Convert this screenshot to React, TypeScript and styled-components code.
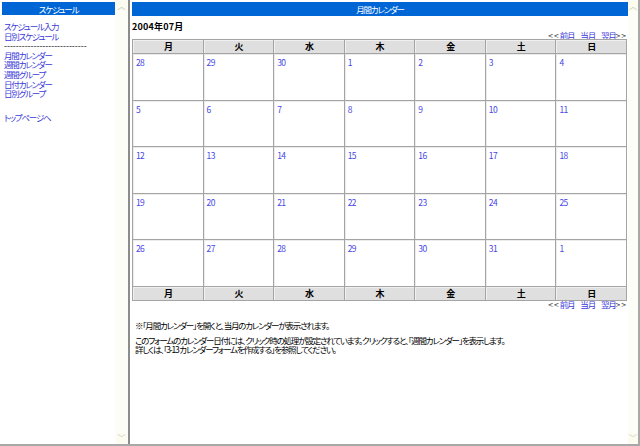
import React from "react";
import styled, { createGlobalStyle } from "styled-components";

const Global = createGlobalStyle`
  html, body { margin: 0; padding: 0; background: #ffffff; overflow: hidden; }
  * { box-sizing: border-box; }
`;

const FONT = `"Noto Sans CJK JP", "Noto Sans", sans-serif`;

const Window = styled.div`
  width: 640px;
  height: 446px;
  display: flex;
  border-right: 2px solid #a8a8a8;
  border-bottom: 2px solid #a8a8a8;
  font-family: ${FONT};
  font-feature-settings: "palt";
  font-size: 8.5px;
  letter-spacing: -1.2px;
  color: #000;
`;

const Frame = styled.div<{ $w?: number }>`
  display: flex;
  height: 100%;
  ${(p) => (p.$w ? `width: ${p.$w}px;` : "flex: 1;")}
`;

const FrameBody = styled.div<{ $pad: number }>`
  flex: 1;
  padding: 2px 0 0 ${(p) => p.$pad}px;
  display: flex;
  flex-direction: column;
`;

const Divider = styled.div`
  width: 3px;
  height: 100%;
  border-left: 2px solid #8c8c8c;
  background: #ffffff;
`;

const Scrollbar = styled.div<{ $w: number }>`
  width: ${(p) => p.$w}px;
  height: 100%;
  background: #fdfdf7;
  display: flex;
  flex-direction: column;
  justify-content: space-between;
  align-items: center;
  padding: 1px 0 1px;
`;

const Arrow = styled.div`
  width: 10px;
  height: 10px;
  display: flex;
  align-items: center;
  justify-content: center;
  background: #fbfbef;
  color: #c8c8c0;
  font-size: 8px;
  letter-spacing: 0;
  line-height: 1;
`;

const HeaderBar = styled.div<{ $h: number }>`
  height: ${(p) => p.$h}px;
  background: #0066d6;
  color: #ffffff;
  display: flex;
  align-items: center;
  justify-content: center;
`;

const SideMenu = styled.div`
  display: flex;
  flex-direction: column;
  padding: 7px 0 0 2px;
  line-height: 9.6px;
`;

const SideLink = styled.a<{ $gap?: number }>`
  color: #3a3ad8;
  text-decoration: none;
  white-space: nowrap;
  margin-top: ${(p) => p.$gap ?? 0}px;
`;

const Dashes = styled.div`
  color: #000;
  white-space: nowrap;
  letter-spacing: 0;
`;

const Title = styled.div`
  font-weight: bold;
  font-size: 9px;
  letter-spacing: 0.2px;
  margin: 6px 0 0 0;
  height: 10px;
  line-height: 10px;
`;

const Nav = styled.div`
  display: flex;
  justify-content: flex-end;
  gap: 6px;
  height: 7px;
  line-height: 7px;
  color: #444;
  white-space: nowrap;
`;

const Angle = styled.span`
  letter-spacing: 1px;
`;

const NavLink = styled.a`
  color: #3a3ad8;
  text-decoration: none;
`;

const Content = styled.div`
  width: 495px;
  display: flex;
  flex-direction: column;
`;

const Grid = styled.div`
  display: grid;
  grid-template-columns: repeat(7, 1fr);
  grid-template-rows: 14px repeat(5, 46.6px) 14px;
  border-top: 1px solid #a4a4a4;
  border-left: 1px solid #a4a4a4;
`;

const HeadCell = styled.div`
  background: #dfdfdf;
  border-right: 1px solid #a4a4a4;
  border-bottom: 1px solid #a4a4a4;
  box-shadow: inset 1px 1px 0 #f0f0f0;
  display: flex;
  align-items: center;
  justify-content: center;
  font-weight: bold;
  font-size: 9px;
`;

const DayCell = styled.div`
  border-right: 1px solid #a4a4a4;
  border-bottom: 1px solid #a4a4a4;
  box-shadow: inset 1px 1px 0 #ececec;
  padding: 3px 0 0 3px;
  line-height: 10px;
  letter-spacing: -0.6px;
`;

const DayLink = styled.a`
  color: #4646e6;
  text-decoration: none;
`;

const Notes = styled.div`
  margin: 13px 0 0 3px;
  line-height: 9.5px;
  white-space: nowrap;
`;

const NoteGap = styled.div`
  height: 5.5px;
`;

const WEEK = ["月", "火", "水", "木", "金", "土", "日"];
const DAYS = [
  28, 29, 30, 1, 2, 3, 4,
  5, 6, 7, 8, 9, 10, 11,
  12, 13, 14, 15, 16, 17, 18,
  19, 20, 21, 22, 23, 24, 25,
  26, 27, 28, 29, 30, 31, 1,
];

const Navigation = () => (
  <Nav>
    <span>
      <Angle>&lt;&lt;</Angle>
      <NavLink href="#">前月</NavLink>
    </span>
    <NavLink href="#">当月</NavLink>
    <span>
      <NavLink href="#">翌月</NavLink>
      <Angle>&gt;&gt;</Angle>
    </span>
  </Nav>
);

export default function App() {
  return (
    <>
      <Global />
      <Window>
        <Frame $w={128}>
          <FrameBody $pad={2}>
            <HeaderBar $h={13}>スケジュール</HeaderBar>
            <SideMenu>
              <SideLink href="#">スケジュール入力</SideLink>
              <SideLink href="#">日別スケジュール</SideLink>
              <Dashes>----------------------------</Dashes>
              <SideLink href="#">月間カレンダー</SideLink>
              <SideLink href="#">週間カレンダー</SideLink>
              <SideLink href="#">週間グループ</SideLink>
              <SideLink href="#">日付カレンダー</SideLink>
              <SideLink href="#">日別グループ</SideLink>
              <SideLink href="#" $gap={14.4}>トップページへ</SideLink>
            </SideMenu>
          </FrameBody>
          <Scrollbar $w={13}>
            <Arrow>︿</Arrow>
            <Arrow>﹀</Arrow>
          </Scrollbar>
        </Frame>
        <Divider />
        <Frame>
          <FrameBody $pad={1}>
            <HeaderBar $h={14}>月間カレンダー</HeaderBar>
            <Content>
              <Title>2004年07月</Title>
              <Navigation />
              <Grid>
                {WEEK.map((w) => (
                  <HeadCell key={"h" + w}>{w}</HeadCell>
                ))}
                {DAYS.map((d, i) => (
                  <DayCell key={i}>
                    <DayLink href="#">{d}</DayLink>
                  </DayCell>
                ))}
                {WEEK.map((w) => (
                  <HeadCell key={"f" + w}>{w}</HeadCell>
                ))}
              </Grid>
              <Navigation />
              <Notes>
                <div>※「月間カレンダー」を開くと、当月のカレンダーが表示されます。</div>
                <NoteGap />
                <div>
                  このフォームのカレンダー日付には、クリック時の処理が設定されています。クリックすると、「週間カレンダー」を表示します。
                </div>
                <div>詳しくは、「3-13 カレンダーフォームを作成する」を参照してください。</div>
              </Notes>
            </Content>
          </FrameBody>
          <Scrollbar $w={10}>
            <Arrow>︿</Arrow>
            <Arrow>﹀</Arrow>
          </Scrollbar>
        </Frame>
      </Window>
    </>
  );
}
